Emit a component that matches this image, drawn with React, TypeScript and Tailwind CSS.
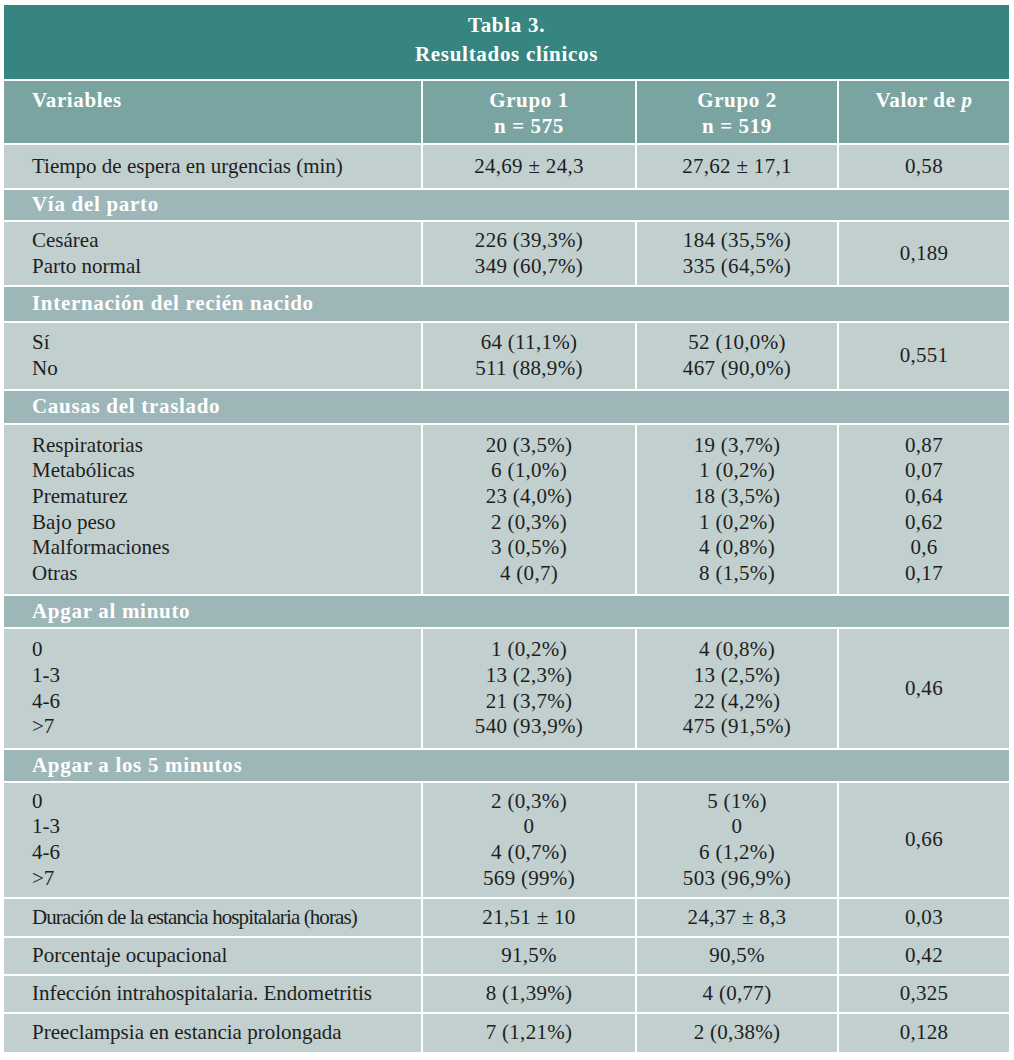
const cols = 'grid grid-cols-[417px_212px_200px_1fr] gap-x-[2px]';

type DataRow = {
  labels: string[];
  g1: string[];
  g2: string[];
  p: string[];
  h: string;
  tight?: boolean;
};

type Block =
  | { kind: 'section'; title: string; h: string }
  | ({ kind: 'data' } & DataRow);

const blocks: Block[] = [
  { kind: 'data', labels: ['Tiempo de espera en urgencias (min)'], g1: ['24,69 ± 24,3'], g2: ['27,62 ± 17,1'], p: ['0,58'], h: 'h-[43px]' },
  { kind: 'section', title: 'Vía del parto', h: 'h-[30px]' },
  { kind: 'data', labels: ['Cesárea', 'Parto normal'], g1: ['226 (39,3%)', '349 (60,7%)'], g2: ['184 (35,5%)', '335 (64,5%)'], p: ['0,189'], h: 'h-[63px]' },
  { kind: 'section', title: 'Internación del recién nacido', h: 'h-[34px]' },
  { kind: 'data', labels: ['Sí', 'No'], g1: ['64 (11,1%)', '511 (88,9%)'], g2: ['52 (10,0%)', '467 (90,0%)'], p: ['0,551'], h: 'h-[66px]' },
  { kind: 'section', title: 'Causas del traslado', h: 'h-[32px]' },
  {
    kind: 'data',
    labels: ['Respiratorias', 'Metabólicas', 'Prematurez', 'Bajo peso', 'Malformaciones', 'Otras'],
    g1: ['20 (3,5%)', '6 (1,0%)', '23 (4,0%)', '2 (0,3%)', '3 (0,5%)', '4 (0,7)'],
    g2: ['19 (3,7%)', '1 (0,2%)', '18 (3,5%)', '1 (0,2%)', '4 (0,8%)', '8 (1,5%)'],
    p: ['0,87', '0,07', '0,64', '0,62', '0,6', '0,17'],
    h: 'h-[169px]',
  },
  { kind: 'section', title: 'Apgar al minuto', h: 'h-[31px]' },
  {
    kind: 'data',
    labels: ['0', '1-3', '4-6', '>7'],
    g1: ['1 (0,2%)', '13 (2,3%)', '21 (3,7%)', '540 (93,9%)'],
    g2: ['4 (0,8%)', '13 (2,5%)', '22 (4,2%)', '475 (91,5%)'],
    p: ['0,46'],
    h: 'h-[119px]',
  },
  { kind: 'section', title: 'Apgar a los 5 minutos', h: 'h-[31px]' },
  {
    kind: 'data',
    labels: ['0', '1-3', '4-6', '>7'],
    g1: ['2 (0,3%)', '0', '4 (0,7%)', '569 (99%)'],
    g2: ['5 (1%)', '0', '6 (1,2%)', '503 (96,9%)'],
    p: ['0,66'],
    h: 'h-[114px]',
  },
  { kind: 'data', labels: ['Duración de la estancia hospitalaria (horas)'], g1: ['21,51 ± 10'], g2: ['24,37 ± 8,3'], p: ['0,03'], h: 'h-[37px]', tight: true },
  { kind: 'data', labels: ['Porcentaje ocupacional'], g1: ['91,5%'], g2: ['90,5%'], p: ['0,42'], h: 'h-[36px]' },
  { kind: 'data', labels: ['Infección intrahospitalaria. Endometritis'], g1: ['8 (1,39%)'], g2: ['4 (0,77)'], p: ['0,325'], h: 'h-[36px]' },
  { kind: 'data', labels: ['Preeclampsia en estancia prolongada'], g1: ['7 (1,21%)'], g2: ['2 (0,38%)'], p: ['0,128'], h: 'h-[38px]' },
];

function Cell({ lines, align, tight }: { lines: string[]; align: 'left' | 'center'; tight?: boolean }) {
  return (
    <div
      className={
        align === 'left'
          ? `flex flex-col justify-center bg-[#c1cfcf] pl-[28px] ${tight ? 'tracking-[-0.9px]' : ''}`
          : 'flex flex-col justify-center items-center bg-[#c1cfcf] tracking-[0.3px]'
      }
    >
      {lines.map((l, i) => (
        <div key={i}>{l}</div>
      ))}
    </div>
  );
}

export default function App() {
  return (
    <div className="min-h-screen bg-white pt-[5px] pl-[4px]">
      <div className="flex w-[1005px] flex-col gap-y-[2px] bg-white font-['Liberation_Serif','Times_New_Roman',serif] text-[21px] leading-[25.6px] text-[#1e1e1e]">
        <div className="flex h-[74px] flex-col items-center bg-[#368580] pt-[6px] font-bold leading-[29px] tracking-[0.7px] text-white">
          <div>Tabla 3.</div>
          <div>Resultados clínicos</div>
        </div>

        <div className={`${cols} h-[62px] font-bold tracking-[0.6px] text-white`}>
          <div className="bg-[#7aa4a1] pl-[28px] pt-[7px]">Variables</div>
          <div className="flex flex-col items-center bg-[#7aa4a1] pt-[7px]">
            <div>Grupo 1</div>
            <div>n = 575</div>
          </div>
          <div className="flex flex-col items-center bg-[#7aa4a1] pt-[7px]">
            <div>Grupo 2</div>
            <div>n = 519</div>
          </div>
          <div className="flex flex-col items-center bg-[#7aa4a1] pt-[7px]">
            <div>
              Valor de <span className="italic">p</span>
            </div>
          </div>
        </div>

        {blocks.map((b, i) =>
          b.kind === 'section' ? (
            <div
              key={i}
              className={`flex items-center bg-[#9db6b8] pl-[28px] font-bold tracking-[0.7px] text-white ${b.h}`}
            >
              {b.title}
            </div>
          ) : (
            <div key={i} className={`${cols} ${b.h}`}>
              <Cell lines={b.labels} align="left" tight={b.tight} />
              <Cell lines={b.g1} align="center" />
              <Cell lines={b.g2} align="center" />
              <Cell lines={b.p} align="center" />
            </div>
          ),
        )}
      </div>
    </div>
  );
}
